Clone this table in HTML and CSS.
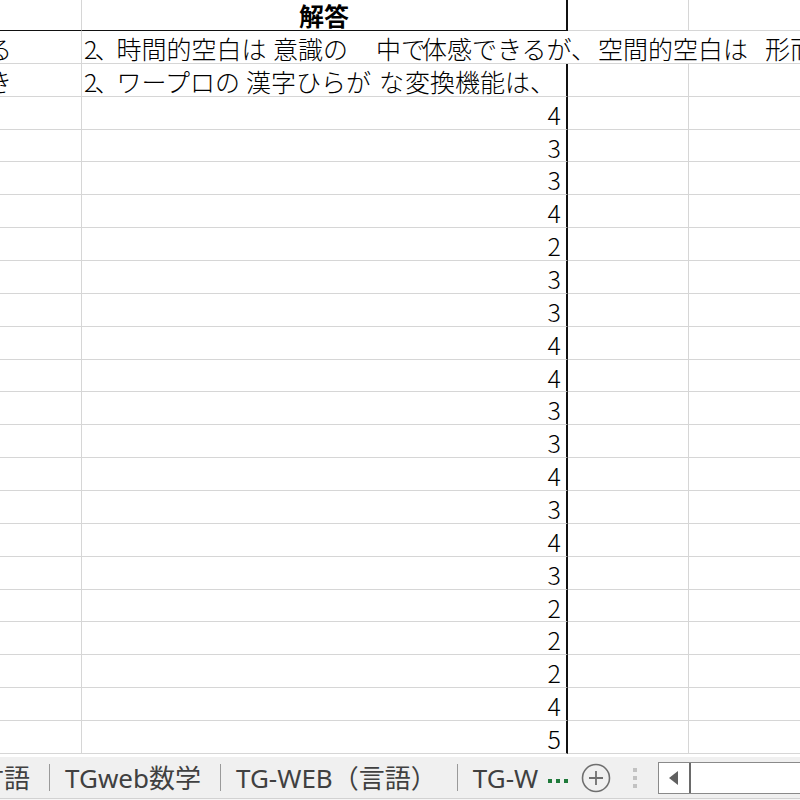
FILE: index.html
```html
<!DOCTYPE html>
<html lang="ja">
<head>
<meta charset="utf-8">
<title>Sheet</title>
<link rel="stylesheet" href="styles.css">
</head>
<body>
<div class="app">
  <div class="sheet">
    <div class="c a hdr-k"></div>
    <div class="c b hdr-k hdr-title">解答</div>
    <div class="c d"></div>
    <div class="c d"></div>

    <div class="c a"><span class="clip">る</span></div>
    <div class="c span txt"><span class="w w1"><span class="lead">2、</span>時間的空白は</span><span class="w w2">意識の</span><span class="w w3">中で</span><span class="w w4">体感できるが、</span><span class="w w5">空間的空白は</span><span class="w">形而上学的なものである</span></div>

    <div class="c a"><span class="clip">き</span></div>
    <div class="c b txt"><span class="w r1"><span class="lead">2、</span>ワープロの</span><span class="w r2">漢字ひらが</span><span class="w r3">な</span><span class="w r4">変換</span><span class="w">機能は、</span></div>
    <div class="c d"></div>
    <div class="c d"></div>

    <div class="c a"></div><div class="c b num">4</div><div class="c d"></div><div class="c d"></div>
    <div class="c a"></div><div class="c b num">3</div><div class="c d"></div><div class="c d"></div>
    <div class="c a"></div><div class="c b num">3</div><div class="c d"></div><div class="c d"></div>
    <div class="c a"></div><div class="c b num">4</div><div class="c d"></div><div class="c d"></div>
    <div class="c a"></div><div class="c b num">2</div><div class="c d"></div><div class="c d"></div>
    <div class="c a"></div><div class="c b num">3</div><div class="c d"></div><div class="c d"></div>
    <div class="c a"></div><div class="c b num">3</div><div class="c d"></div><div class="c d"></div>
    <div class="c a"></div><div class="c b num">4</div><div class="c d"></div><div class="c d"></div>
    <div class="c a"></div><div class="c b num">4</div><div class="c d"></div><div class="c d"></div>
    <div class="c a"></div><div class="c b num">3</div><div class="c d"></div><div class="c d"></div>
    <div class="c a"></div><div class="c b num">3</div><div class="c d"></div><div class="c d"></div>
    <div class="c a"></div><div class="c b num">4</div><div class="c d"></div><div class="c d"></div>
    <div class="c a"></div><div class="c b num">3</div><div class="c d"></div><div class="c d"></div>
    <div class="c a"></div><div class="c b num">4</div><div class="c d"></div><div class="c d"></div>
    <div class="c a"></div><div class="c b num">3</div><div class="c d"></div><div class="c d"></div>
    <div class="c a"></div><div class="c b num">2</div><div class="c d"></div><div class="c d"></div>
    <div class="c a"></div><div class="c b num">2</div><div class="c d"></div><div class="c d"></div>
    <div class="c a"></div><div class="c b num">2</div><div class="c d"></div><div class="c d"></div>
    <div class="c a"></div><div class="c b num">4</div><div class="c d"></div><div class="c d"></div>
    <div class="c a"></div><div class="c b num">5</div><div class="c d"></div><div class="c d"></div>
  </div>

  <div class="tabbar">
    <div class="tabs">
      <div class="tab first">言語</div>
      <div class="sep"></div>
      <div class="tab">TGweb数学</div>
      <div class="sep"></div>
      <div class="tab third">TG-WEB（言語）</div>
      <div class="sep"></div>
      <div class="tab last">TG-WEB（数学）</div>
    </div>
    <div class="more"><i></i><i></i><i></i></div>
    <div class="add">
      <svg width="30" height="30" viewBox="0 0 30 30"><circle cx="15" cy="15" r="13.5" fill="none" stroke="#6f6f6f" stroke-width="1.6"/><path d="M15 8v14M8 15h14" stroke="#6f6f6f" stroke-width="1.8"/></svg>
    </div>
    <div class="vdots"><i></i><i></i><i></i></div>
    <div class="hscroll">
      <div class="arrow"><svg width="10" height="14" viewBox="0 0 10 14"><path d="M9 0V14L0 7Z" fill="#606060"/></svg></div>
      <div class="track"></div>
    </div>
  </div>
  <div class="bottomstrip"></div>
</div>
</body>
</html>
```

FILE: styles.css
```css
html, body {
  margin: 0;
  padding: 0;
  width: 800px;
  height: 800px;
  overflow: hidden;
  background: #fff;
}

.app {
  width: 800px;
  height: 800px;
  display: flex;
  flex-direction: column;
  overflow: hidden;
}

.sheet {
  display: grid;
  grid-template-columns: 82px 486px 121px 200px;
  grid-template-rows: 31px repeat(22, 32.86px);
  font-family: "Noto Sans CJK JP", sans-serif;
  font-size: 25px;
  color: #000;
  flex: none;
  height: 756px;
  overflow: hidden;
}

.c {
  box-sizing: border-box;
  border-right: 1px solid #d6d6d6;
  border-bottom: 1px solid #d6d6d6;
  overflow: hidden;
  white-space: nowrap;
  display: flex;
  align-items: center;
  line-height: 1;
}

.b {
  border-right: 2px solid #111;
}

.hdr-k {
  border-bottom: 1px solid #111;
}

.hdr-title {
  justify-content: center;
  font-weight: 700;
  padding-top: 1px;
}

.span {
  grid-column: 2 / 5;
  border-right: none;
}

.txt {
  padding-left: 2px;
  padding-top: 4px;
  font-weight: 300;
}

.lead {
  letter-spacing: -3px;
}

.w {
  display: inline-block;
  flex: none;
  white-space: nowrap;
}

.w1 { width: 189px; }
.w2 { width: 103px; }
.w3 { width: 46px; }
.w4 { width: 176px; }
.w5 { width: 167px; }

.r1 { width: 162px; }
.r2 { width: 133px; }
.r3 { width: 26px; }
.r4 { width: 50px; }

.clip {
  margin-left: -13px;
  padding-top: 4px;
  font-weight: 300;
}

.num {
  justify-content: flex-end;
  padding-right: 5px;
  padding-top: 3px;
  font-weight: 300;
}

.tabbar {
  flex: none;
  height: 41px;
  margin-top: 1px;
  background: #f0f0f0;
  display: flex;
  align-items: center;
  font-family: "Noto Sans", "Noto Sans CJK JP", sans-serif;
  font-size: 26px;
  color: #404040;
  border-bottom: 1px solid #d2d2d2;
}

.tabs {
  display: flex;
  align-items: center;
  width: 540px;
  flex: none;
  overflow: hidden;
  height: 100%;
}

.tab {
  white-space: nowrap;
  padding: 0 19px 0 15px;
  line-height: 1;
  flex: none;
}

.tab.first {
  margin-left: -37px;
}

.tab.third {
  padding-right: 20px;
}

.tab.last {
  padding-right: 0;
}

.sep {
  width: 1px;
  height: 27px;
  background: #9a9a9a;
  flex: none;
}

.more {
  display: flex;
  gap: 4px;
  margin-left: 8px;
  padding-top: 6px;
}

.more i {
  width: 4px;
  height: 4px;
  background: #1f7a3a;
  display: block;
}

.add {
  margin-left: 13px;
  display: flex;
  width: 30px;
  height: 30px;
}

.vdots {
  margin-left: 22px;
  display: flex;
  flex-direction: column;
  gap: 4px;
}

.vdots i {
  width: 4px;
  height: 4px;
  background: #c2c2c2;
  display: block;
}

.hscroll {
  margin-left: 21px;
  flex: 1;
  height: 30px;
  border: 1px solid #8a8a8a;
  border-right: none;
  background: #fff;
  display: flex;
}

.arrow {
  width: 30px;
  display: flex;
  align-items: center;
  justify-content: center;
  border-right: 2px solid #6a6a6a;
}

.track {
  flex: 1;
}

.bottomstrip {
  flex: 1;
  background: #f6f6f6;
}
```
